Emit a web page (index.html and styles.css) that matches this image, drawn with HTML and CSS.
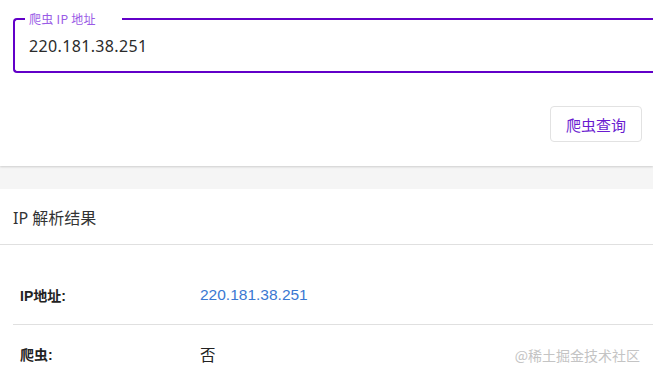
FILE: index.html
```html
<!DOCTYPE html>
<html lang="zh-CN">
<head>
<meta charset="utf-8">
<title>爬虫 IP 查询</title>
<link rel="stylesheet" href="styles.css">
</head>
<body>
<div class="page">
  <section class="query-card">
    <div class="field">
      <span class="field-label">爬虫 IP 地址</span>
      <span class="field-value">220.181.38.251</span>
    </div>
    <div class="actions">
      <button class="btn" type="button">爬虫查询</button>
    </div>
  </section>
  <div class="strip"></div>
  <section class="result-card">
    <h2 class="result-title">IP 解析结果</h2>
    <div class="rows">
      <div class="row">
        <div class="row-label">IP地址:</div>
        <div class="row-value link">220.181.38.251</div>
      </div>
      <div class="row">
        <div class="row-label">爬虫:</div>
        <div class="row-value">否</div>
      </div>
    </div>
  </section>
  <div class="watermark">@稀土掘金技术社区</div>
</div>
</body>
</html>
```
FILE: styles.css
```css
html, body {
  margin: 0;
  padding: 0;
  background: #ffffff;
}
body {
  font-family: "Noto Sans", "Noto Sans CJK SC", sans-serif;
  color: #333333;
  overflow: hidden;
}
.page {
  position: relative;
  width: 653px;
  height: 379px;
  overflow: hidden;
}
.query-card {
  position: relative;
  z-index: 1;
  background: #ffffff;
  padding: 18px 0 24px 13px;
  box-shadow: 0 1px 2px rgba(0, 0, 0, 0.16);
}
.field {
  position: relative;
  box-sizing: border-box;
  height: 55px;
  border: 2px solid #6200c8;
  border-right: none;
  border-radius: 4px 0 0 4px;
  padding-left: 14px;
  display: flex;
  align-items: center;
}
.field-label {
  position: absolute;
  left: 10px;
  top: -8px;
  padding: 0 26px 0 4px;
  background: #ffffff;
  font-family: "Noto Sans CJK SC", sans-serif;
  font-size: 12px;
  line-height: 14px;
  letter-spacing: 0.3px;
  color: #9a5be6;
}
.field-value {
  font-size: 16px;
  color: #2b2b2b;
  letter-spacing: 0.35px;
}
.actions {
  display: flex;
  justify-content: flex-end;
  padding-right: 11px;
  margin-top: 33px;
}
.btn {
  box-sizing: border-box;
  width: 92px;
  height: 36px;
  border: 1px solid #e2e2e2;
  border-radius: 4px;
  background: #ffffff;
  color: #6a1bd0;
  font-family: "Noto Sans CJK SC", sans-serif;
  font-size: 15px;
  padding: 0;
}
.strip {
  height: 23px;
  background: #f5f5f5;
}
.result-card {
  background: #ffffff;
}
.result-title {
  margin: 0;
  height: 56px;
  box-sizing: border-box;
  padding-left: 13px;
  display: flex;
  align-items: center;
  font-size: 16px;
  font-weight: normal;
  color: #333333;
  border-bottom: 1px solid #e0e0e0;
}
.rows {
  padding-top: 21px;
}
.row {
  margin-left: 13px;
  height: 58px;
  display: flex;
  align-items: center;
  border-bottom: 1px solid #e0e0e0;
}
.row-label {
  width: 180px;
  padding-left: 7px;
  font-family: "Liberation Sans", "Noto Sans CJK SC", sans-serif;
  font-size: 14px;
  font-weight: bold;
  color: #222222;
}
.row-value {
  font-family: "Liberation Sans", "Noto Sans CJK SC", sans-serif;
  font-size: 15.5px;
  color: #222222;
}
.row-value.link {
  color: #3a78d2;
}
.watermark {
  position: absolute;
  right: 13px;
  top: 346px;
  font-family: "Noto Sans CJK SC", sans-serif;
  font-size: 14px;
  line-height: 18px;
  color: #c4c4c4;
}
```
